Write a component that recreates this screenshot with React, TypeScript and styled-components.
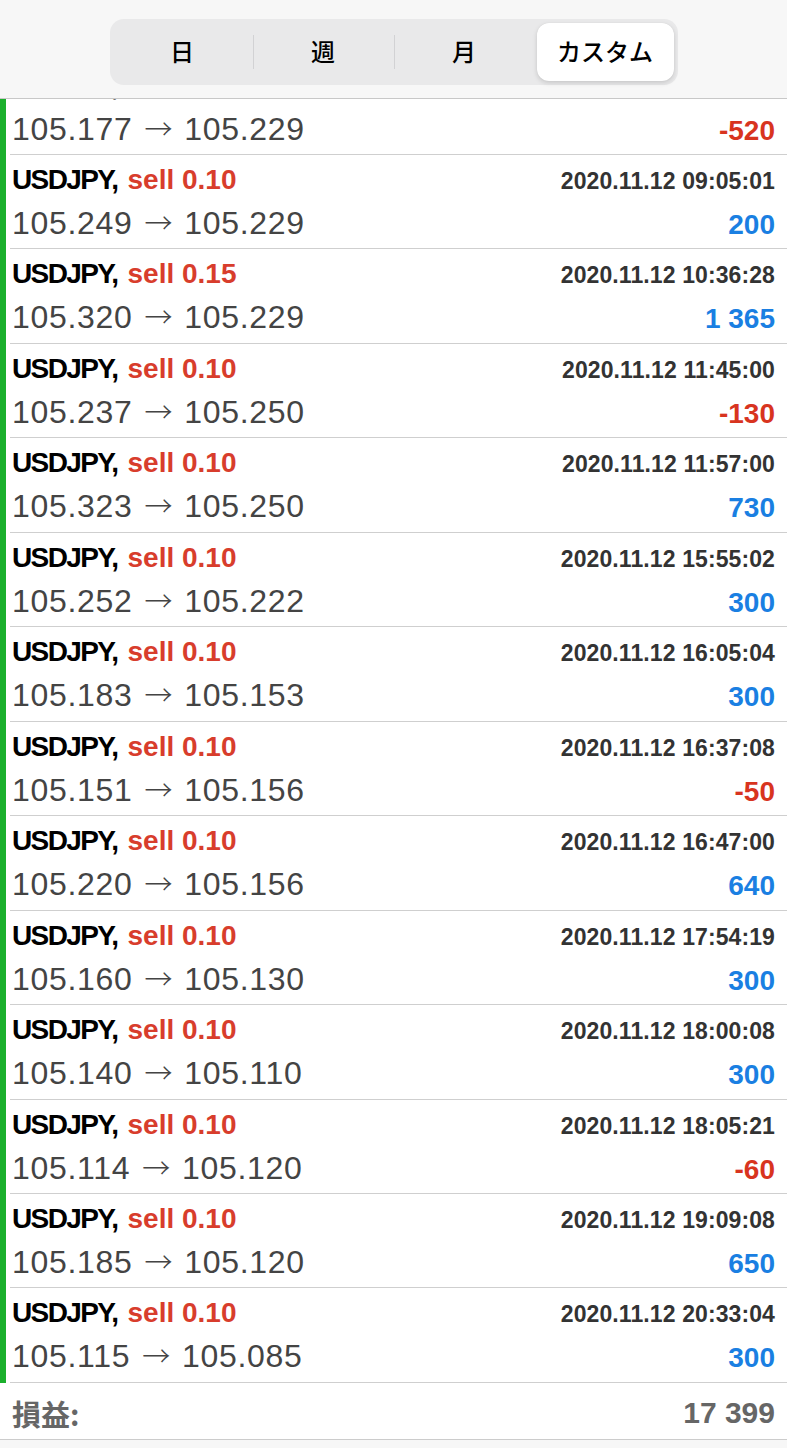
import React from 'react';
import styled, { createGlobalStyle } from 'styled-components';

const GlobalStyle = createGlobalStyle`
  html, body {
    margin: 0;
    padding: 0;
    background: #ffffff;
  }
  body {
    font-family: "Liberation Sans", "Noto Sans CJK JP", sans-serif;
  }
`;

const Page = styled.div`
  width: 787px;
  height: 1448px;
  display: flex;
  flex-direction: column;
  background: #f7f7f7;
  overflow: hidden;
`;

const Header = styled.div`
  display: flex;
  justify-content: center;
  padding: 19px 0 13px;
  background: #f7f7f7;
  border-bottom: 1px solid #c8c8c8;
`;

const Segmented = styled.div`
  width: 568px;
  height: 66px;
  display: flex;
  background: #e9e9ea;
  border-radius: 14px;
  box-sizing: border-box;
  padding: 3px 2px;
`;

const Segment = styled.div<{ $active?: boolean; $divider?: boolean }>`
  flex: 1;
  position: relative;
  display: flex;
  align-items: center;
  justify-content: center;
  margin: 1px 2px;
  padding-bottom: 3px;
  border-radius: 12px;
  background: ${(p) => (p.$active ? '#ffffff' : 'transparent')};
  box-shadow: ${(p) => (p.$active ? '0 2px 5px rgba(0,0,0,0.14), 0 0 1px rgba(0,0,0,0.1)' : 'none')};
  font-family: "Noto Sans CJK JP", sans-serif;
  font-size: 24px;
  font-weight: 500;
  color: #000;

  &::after {
    content: '';
    display: ${(p) => (p.$divider ? 'block' : 'none')};
    position: absolute;
    right: -3px;
    top: 12px;
    bottom: 12px;
    width: 1px;
    background: #d2d2d4;
  }
`;

const List = styled.div`
  overflow: hidden;
  background: #ffffff;
  border-left: 6px solid #1bb02c;
  padding-left: 4px;
`;

const Row = styled.div<{ $first?: boolean }>`
  height: 94.46px;
  box-sizing: border-box;
  border-bottom: 1px solid #cfcfcf;
  padding: 8px 12px 0 2px;
  margin-top: ${(p) => (p.$first ? '-38.46px' : '0')};
  display: flex;
  flex-direction: column;
  gap: 6px;
`;

const Line = styled.div<{ $height: number }>`
  display: flex;
  justify-content: space-between;
  align-items: baseline;
  line-height: ${(p) => p.$height}px;
  height: ${(p) => p.$height}px;
`;

const Symbol = styled.span`
  font-size: 28px;
  font-weight: 700;
  color: #000;
  letter-spacing: -1.6px;
`;

const Side = styled.span`
  font-size: 28px;
  font-weight: 700;
  color: #d83d2c;
  margin-left: 10px;
`;

const Stamp = styled.span`
  font-size: 23px;
  font-weight: 700;
  color: #333;
  letter-spacing: 0.1px;
`;

const Prices = styled.span`
  font-size: 32px;
  color: #444;
  letter-spacing: 0.7px;
  line-height: 38px;
`;

const Arrow = styled.span`
  display: inline-block;
  font-family: "Noto Sans CJK JP", sans-serif;
  font-weight: 300;
  font-size: 28px;
  line-height: 38px;
  margin: 0 11px 0 12px;
`;

const Profit = styled.span<{ $loss: boolean }>`
  font-size: 28px;
  font-weight: 700;
  color: ${(p) => (p.$loss ? '#d8341f' : '#1a7fe2')};
`;

const Footer = styled.div`
  display: flex;
  justify-content: space-between;
  align-items: center;
  height: 57px;
  box-sizing: border-box;
  padding: 4px 12px 0;
  background: #ffffff;
  border-bottom: 1px solid #cccccc;
  font-size: 30px;
  font-weight: 700;
  color: #666;
`;

const FooterLabel = styled.span`
  font-family: "Noto Sans CJK JP", sans-serif;
  font-size: 29px;
  font-weight: 700;
  color: #666;
`;

type Deal = {
  lot: string;
  time: string;
  open: string;
  close: string;
  profit: string;
};

const deals: Deal[] = [
  { lot: '0.10', time: '08:47:13', open: '105.177', close: '105.229', profit: '-520' },
  { lot: '0.10', time: '09:05:01', open: '105.249', close: '105.229', profit: '200' },
  { lot: '0.15', time: '10:36:28', open: '105.320', close: '105.229', profit: '1 365' },
  { lot: '0.10', time: '11:45:00', open: '105.237', close: '105.250', profit: '-130' },
  { lot: '0.10', time: '11:57:00', open: '105.323', close: '105.250', profit: '730' },
  { lot: '0.10', time: '15:55:02', open: '105.252', close: '105.222', profit: '300' },
  { lot: '0.10', time: '16:05:04', open: '105.183', close: '105.153', profit: '300' },
  { lot: '0.10', time: '16:37:08', open: '105.151', close: '105.156', profit: '-50' },
  { lot: '0.10', time: '16:47:00', open: '105.220', close: '105.156', profit: '640' },
  { lot: '0.10', time: '17:54:19', open: '105.160', close: '105.130', profit: '300' },
  { lot: '0.10', time: '18:00:08', open: '105.140', close: '105.110', profit: '300' },
  { lot: '0.10', time: '18:05:21', open: '105.114', close: '105.120', profit: '-60' },
  { lot: '0.10', time: '19:09:08', open: '105.185', close: '105.120', profit: '650' },
  { lot: '0.10', time: '20:33:04', open: '105.115', close: '105.085', profit: '300' },
];

const tabs = ['日', '週', '月', 'カスタム'];

const App: React.FC = () => {
  const active = 3;

  return (
    <Page>
      <GlobalStyle />
      <Header>
        <Segmented>
          {tabs.map((t, i) => (
            <Segment
              key={t}
              $active={i === active}
              $divider={i < tabs.length - 1 && i !== active && i + 1 !== active}
            >
              {t}
            </Segment>
          ))}
        </Segmented>
      </Header>

      <List>
        {deals.map((d, i) => (
          <Row key={d.time} $first={i === 0}>
            <Line $height={34}>
              <span>
                <Symbol>USDJPY,</Symbol>
                <Side>sell {d.lot}</Side>
              </span>
              <Stamp>2020.11.12 {d.time}</Stamp>
            </Line>
            <Line $height={38}>
              <Prices>
                {d.open}
                <Arrow>→</Arrow>
                {d.close}
              </Prices>
              <Profit $loss={d.profit.startsWith('-')}>{d.profit}</Profit>
            </Line>
          </Row>
        ))}
      </List>

      <Footer>
        <FooterLabel>損益:</FooterLabel>
        <span>17 399</span>
      </Footer>
    </Page>
  );
};

export default App;
